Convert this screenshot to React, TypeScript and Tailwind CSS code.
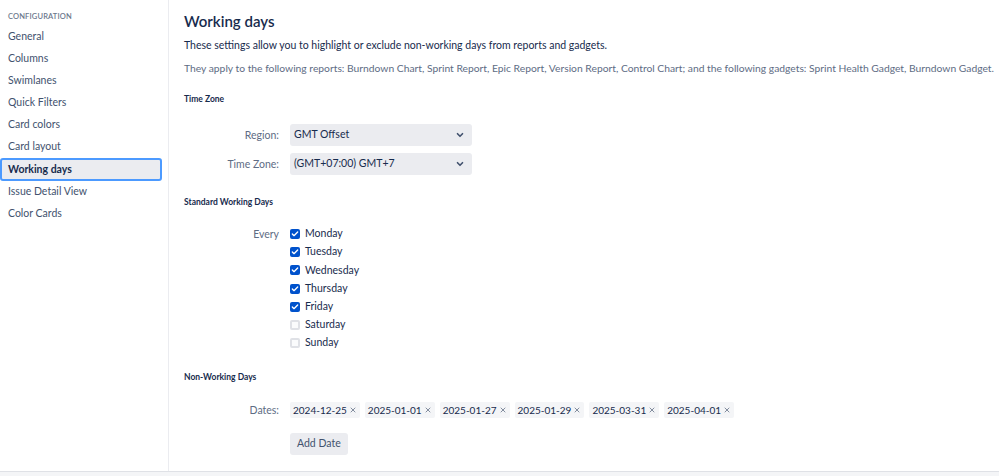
import { ChevronDown, Check, X } from "lucide-react";

const NAV = [
  "General",
  "Columns",
  "Swimlanes",
  "Quick Filters",
  "Card colors",
  "Card layout",
  "Working days",
  "Issue Detail View",
  "Color Cards",
];

const DAYS: [string, boolean][] = [
  ["Monday", true],
  ["Tuesday", true],
  ["Wednesday", true],
  ["Thursday", true],
  ["Friday", true],
  ["Saturday", false],
  ["Sunday", false],
];

const DATES = ["2024-12-25", "2025-01-01", "2025-01-27", "2025-01-29", "2025-03-31", "2025-04-01"];

function Select({ value }: { value: string }) {
  return (
    <div className="flex h-[22px] w-[182px] items-center justify-between rounded-[3px] bg-[#ebecf0] pl-[4px] pr-[7px] text-[10.5px] text-[#172b4d]">
      <span>{value}</span>
      <ChevronDown className="h-[10px] w-[10px] text-[#42526e]" strokeWidth={4} />
    </div>
  );
}

function Row({ label, children, top }: { label: string; children: React.ReactNode; top?: boolean }) {
  return (
    <div className={`flex gap-[11px] ${top ? "items-start" : "items-center"}`}>
      <div className="w-[95px] shrink-0 text-right text-[10.5px] leading-[18px] text-[#5e6c84]">{label}</div>
      {children}
    </div>
  );
}

export default function App() {
  return (
    <div
      className="flex h-[476px] w-[999px] flex-col overflow-hidden bg-white"
      style={{ fontFamily: 'Lato, "Open Sans", sans-serif' }}
    >
      <div className="flex min-h-0 flex-1">
        <aside className="w-[169px] shrink-0 border-r border-[#ebecf0] pr-[6px] pt-[11px]">
          <div className="pl-[8px] text-[7.5px] font-semibold uppercase leading-[12px] tracking-[0.02em] text-[#6b778c]">
            Configuration
          </div>
          <nav className="mt-[3px] flex flex-col">
            {NAV.map((item) =>
              item === "Working days" ? (
                <div
                  key={item}
                  className="flex h-[23px] items-center rounded-[3px] border-2 border-[#4c9aff] bg-[#ebecf0] pl-[6px] text-[10.5px] font-bold text-[#172b4d]"
                >
                  {item}
                </div>
              ) : (
                <div key={item} className="flex h-[22px] items-center pl-[8px] text-[10.5px] text-[#42526e]">
                  {item}
                </div>
              )
            )}
          </nav>
        </aside>

        <main className="flex-1 pl-[15px] pt-[10px] text-[#172b4d]">
          <h1 className="text-[15px] font-semibold leading-[22px]">Working days</h1>
          <p className="mt-[4px] text-[10.5px] leading-[18px]">
            These settings allow you to highlight or exclude non-working days from reports and gadgets.
          </p>
          <p className="mt-[5px] whitespace-nowrap text-[10.3px] leading-[18px] text-[#5e6c84]">
            They apply to the following reports: Burndown Chart, Sprint Report, Epic Report, Version Report, Control
            Chart; and the following gadgets: Sprint Health Gadget, Burndown Gadget.
          </p>

          <h2 className="mt-[15px] text-[8.5px] font-bold leading-[14px]">Time Zone</h2>
          <div className="mt-[18px] flex flex-col gap-[7px]">
            <Row label="Region:">
              <Select value="GMT Offset" />
            </Row>
            <Row label="Time Zone:">
              <Select value="(GMT+07:00) GMT+7" />
            </Row>
          </div>

          <h2 className="mt-[20px] text-[8.5px] font-bold leading-[14px]">Standard Working Days</h2>
          <div className="mt-[16px]">
            <Row label="Every" top>
              <div className="flex flex-col">
                {DAYS.map(([d, on]) => (
                  <div key={d} className="flex h-[18.2px] items-center gap-[5px] text-[10.5px] text-[#172b4d]">
                    {on ? (
                      <span className="flex h-[10px] w-[10px] items-center justify-center rounded-[2px] bg-[#0052cc]">
                        <Check className="h-[8px] w-[8px] text-white" strokeWidth={4} />
                      </span>
                    ) : (
                      <span className="h-[10px] w-[10px] rounded-[2px] border-2 border-[#dfe1e6] bg-[#fafbfc]" />
                    )}
                    <span>{d}</span>
                  </div>
                ))}
              </div>
            </Row>
          </div>

          <h2 className="mt-[18px] text-[8.5px] font-bold leading-[14px]">Non-Working Days</h2>
          <div className="mt-[17px]">
            <Row label="Dates:">
              <div className="flex gap-[5px]">
                {DATES.map((d) => (
                  <span
                    key={d}
                    className="flex h-[16px] items-center gap-[2px] rounded-[2px] bg-[#f4f5f7] pl-[3px] pr-[3px] text-[10px] text-[#172b4d]"
                  >
                    {d}
                    <X className="h-[8px] w-[8px] text-[#6b778c]" strokeWidth={2.5} />
                  </span>
                ))}
              </div>
            </Row>
          </div>
          <div className="ml-[106px] mt-[10px]">
            <button className="h-[22px] rounded-[3px] bg-[#ebecf0] px-[7px] text-[10.5px] text-[#42526e]">Add Date</button>
          </div>
        </main>
      </div>
      <div className="h-[5px] shrink-0 border-t border-[#dfe1e6] bg-[#f4f5f7]" />
    </div>
  );
}
